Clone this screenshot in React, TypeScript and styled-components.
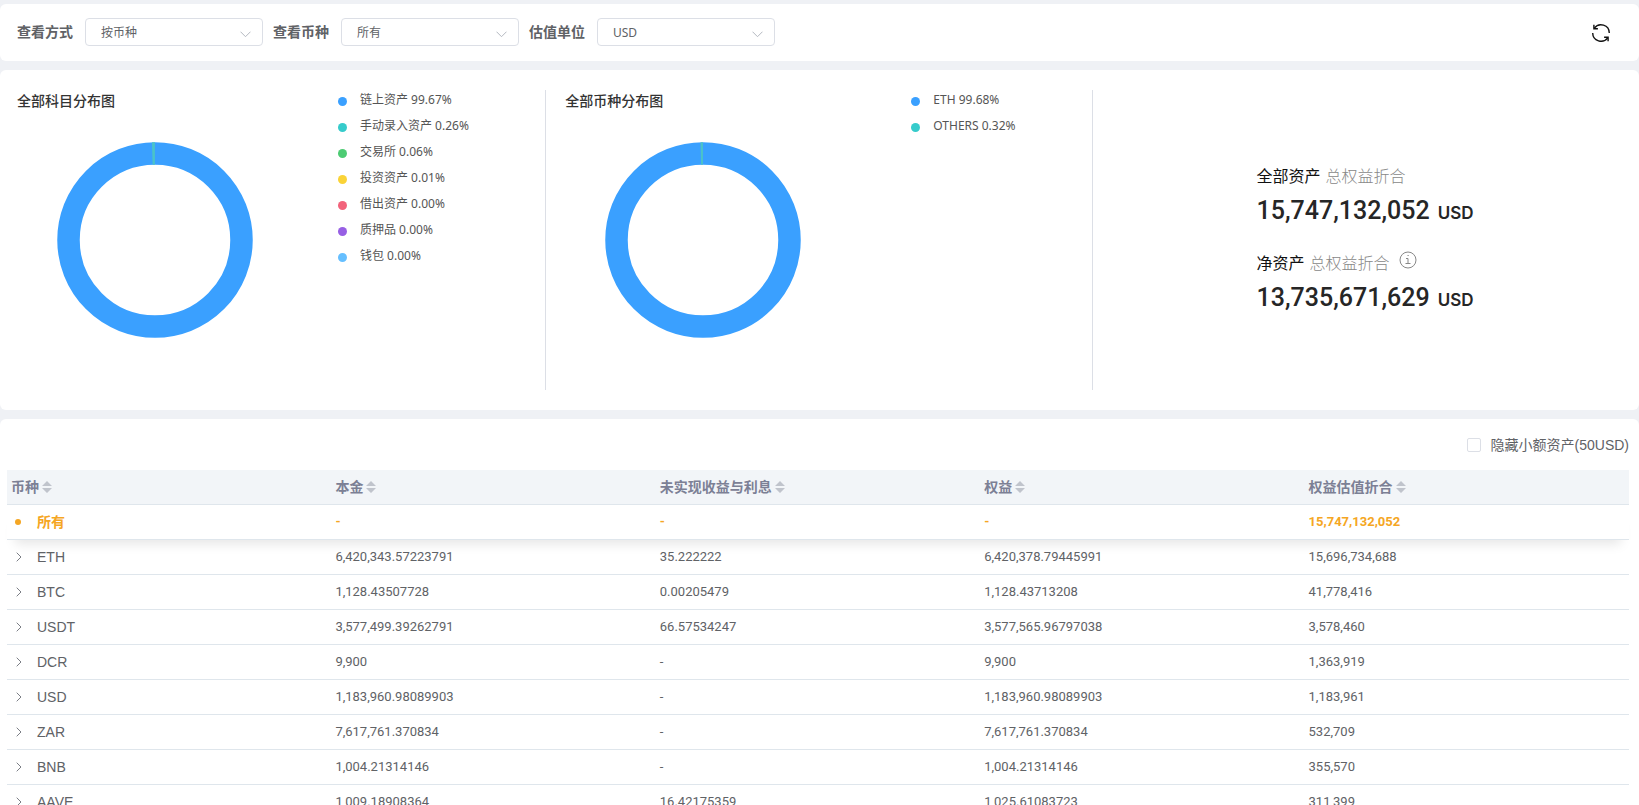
import React from "react";
import styled, { createGlobalStyle } from "styled-components";

const cjk = '"Noto Sans CJK SC", sans-serif';

const GlobalStyle = createGlobalStyle`
  * { box-sizing: border-box; }
  body {
    margin: 0;
    background: #eff1f5;
    color: #606266;
    font: 14px/20px "Liberation Sans", ${cjk};
  }
  button, input, select { font: inherit; color: inherit; }
`;

const Page = styled.main`
  display: flex;
  flex-direction: column;
  gap: 9px;
  height: 100vh;
  padding-top: 4px;
  overflow: hidden;
`;

const Panel = styled.section`
  flex: none;
  background: #fff;
  border-radius: 6px;
`;

const Toolbar = styled(Panel)`
  display: flex;
  align-items: center;
  gap: 10px;
  height: 57px;
  padding: 0 28px 1px 17px;
`;

const Field = styled.label`
  display: flex;
  align-items: center;
  gap: 12px;
  font-weight: 700;
`;

const SelectBox = styled.span`
  position: relative;
  width: 178px;
  svg {
    position: absolute;
    top: 13px;
    right: 12px;
    pointer-events: none;
  }
`;

const Select = styled.select`
  display: block;
  width: 100%;
  height: 28px;
  padding: 2px 30px 0 15px;
  border: 1px solid #dcdfe6;
  border-radius: 4px;
  background: #fff;
  appearance: none;
  font: 12px/18px "Noto Sans", ${cjk};
`;

const RefreshButton = styled.button`
  display: flex;
  margin: 2px 0 0 auto;
  padding: 0;
  border: 0;
  background: none;
  color: #111;
  cursor: pointer;
`;

const Overview = styled(Panel)`
  display: grid;
  grid-template-columns: repeat(3, 1fr);
  padding: 20px 0;
`;

const ChartColumn = styled.div<{ $chart: string }>`
  display: grid;
  grid-template-columns: ${(p) => p.$chart} 1fr;
  height: 300px;
  border-right: 1px solid #dcdfe6;
`;

const ChartSide = styled.div<{ $inset: number }>`
  padding-left: ${(p) => p.$inset}px;
`;

const ChartTitle = styled.h2`
  margin: 0 0 29px;
  color: #333;
  font-size: 14px;
  line-height: 22px;
  font-weight: 500;
`;

const Ring = styled.svg`
  display: block;
  margin-left: 39px;
`;

const Legend = styled.ul`
  margin: 0;
  padding: 0;
  list-style: none;
  font: 12px/20px "Noto Sans", ${cjk};
  color: #555;
`;

const LegendItem = styled.li<{ $color: string }>`
  display: flex;
  align-items: center;
  gap: 13px;
  height: 20px;
  margin-bottom: 6px;
  &::before {
    content: "";
    width: 9px;
    height: 9px;
    margin-top: 2px;
    border-radius: 50%;
    background: ${(p) => p.$color};
  }
`;

const Totals = styled.div`
  display: flex;
  flex-direction: column;
  gap: 15px;
  padding: 73px 0 0 30%;
`;

const TotalLabel = styled.div`
  display: flex;
  align-items: center;
  gap: 5px;
  height: 24px;
  color: #111;
  font: 400 16px/24px ${cjk};
`;

const Muted = styled.span`
  color: #888;
  font-weight: 300;
`;

const InfoButton = styled.button`
  display: flex;
  margin: 0 0 4px 4px;
  padding: 0;
  border: 0;
  background: none;
  color: #888;
`;

const TotalValue = styled.div`
  display: flex;
  align-items: baseline;
  gap: 8px;
  height: 48px;
  color: #262626;
  font: 500 25px/48px Roboto, sans-serif;
`;

const Unit = styled.span`
  font: 600 17px/24px Inter, sans-serif;
`;

const TablePanel = styled(Panel)`
  padding: 16px 10px 0 7px;
`;

const HideSmall = styled.label`
  display: flex;
  justify-content: flex-end;
  align-items: center;
  gap: 10px;
  height: 20px;
  margin-bottom: 15px;
`;

const Checkbox = styled.input`
  width: 14px;
  height: 14px;
  margin: 0;
  border: 1px solid #dcdfe6;
  border-radius: 2px;
  background: #fff;
  appearance: none;
  &:checked { background: #f5a623; }
`;

const Table = styled.table`
  width: 100%;
  table-layout: fixed;
  border-collapse: separate;
  border-spacing: 0;
  text-align: left;
`;

const HeadCell = styled.th`
  height: 35px;
  padding: 0 4px;
  border-bottom: 1px solid #dfe6ec;
  background: #f2f5f8;
  color: #7c8095;
  font-weight: 700;
`;

const SortButton = styled.button`
  display: flex;
  align-items: center;
  gap: 3px;
  padding: 0;
  border: 0;
  background: none;
`;

const Row = styled.tr<{ $total?: boolean }>`
  color: ${(p) => (p.$total ? "#f5a623" : "#606266")};
  font-weight: ${(p) => (p.$total ? 700 : 400)};
  box-shadow: ${(p) => (p.$total ? "0 12px 12px -8px rgba(0, 0, 0, 0.1)" : "none")};
`;

const Cell = styled.td`
  height: 35px;
  padding: 0 4px;
  border-bottom: 1px solid #dfe6ec;
  font-family: Roboto, sans-serif;
  font-size: 13px;
`;

const NameCell = styled(Cell)`
  font-family: "Liberation Sans", ${cjk};
  font-size: 14px;
`;

const CoinName = styled.span`
  display: flex;
  align-items: center;
  gap: 12px;
`;

const Marker = styled.span`
  display: flex;
  justify-content: center;
  width: 14px;
`;

const Dot = styled.span`
  width: 6px;
  height: 6px;
  border-radius: 50%;
  background: #f5a623;
`;

const ExpandButton = styled.button`
  display: flex;
  margin-left: 2px;
  padding: 0;
  border: 0;
  background: none;
`;

const filters: [string, string][] = [
  ["查看方式", "按币种"],
  ["查看币种", "所有"],
  ["估值单位", "USD"],
];

const subjects: [string, string][] = [
  ["链上资产 99.67%", "#3aa0ff"],
  ["手动录入资产 0.26%", "#36cbcb"],
  ["交易所 0.06%", "#4dcb73"],
  ["投资资产 0.01%", "#fad337"],
  ["借出资产 0.00%", "#f2637b"],
  ["质押品 0.00%", "#975fe4"],
  ["钱包 0.00%", "#66bfff"],
];

const coins: [string, string][] = [
  ["ETH 99.68%", "#3aa0ff"],
  ["OTHERS 0.32%", "#36cbcb"],
];

const columns = ["币种", "本金", "未实现收益与利息", "权益", "权益估值折合"];

const rows = [
  ["ETH", "6,420,343.57223791", "35.222222", "6,420,378.79445991", "15,696,734,688"],
  ["BTC", "1,128.43507728", "0.00205479", "1,128.43713208", "41,778,416"],
  ["USDT", "3,577,499.39262791", "66.57534247", "3,577,565.96797038", "3,578,460"],
  ["DCR", "9,900", "-", "9,900", "1,363,919"],
  ["USD", "1,183,960.98089903", "-", "1,183,960.98089903", "1,183,961"],
  ["ZAR", "7,617,761.370834", "-", "7,617,761.370834", "532,709"],
  ["BNB", "1,004.21314146", "-", "1,004.21314146", "355,570"],
  ["AAVE", "1,009.18908364", "16.42175359", "1,025.61083723", "311,399"],
];

function Distribution({ title, items, inset, chart, rest }: {
  title: string; items: [string, string][]; inset: number; chart: string; rest: number;
}) {
  return (
    <ChartColumn $chart={chart}>
      <ChartSide $inset={inset}>
        <ChartTitle>{title}</ChartTitle>
        <Ring width="198" height="198" viewBox="0 0 198 198" fill="none" strokeWidth="22.5" role="img" aria-label={title}>
          <circle cx="99" cy="99" r="86.5" stroke="#3aa0ff" />
          <circle cx="99" cy="99" r="86.5" stroke="#4bc3c8" pathLength="100"
            strokeDasharray={`${rest} ${100 - rest}`} transform={`rotate(${-90 - rest * 3.6} 99 99)`} />
        </Ring>
      </ChartSide>
      <Legend>
        {items.map(([text, color]) => <LegendItem key={text} $color={color}>{text}</LegendItem>)}
      </Legend>
    </ChartColumn>
  );
}

export default function App() {
  return (
    <>
      <GlobalStyle />
      <Page>
        <Toolbar>
          {filters.map(([label, value]) => (
            <Field key={label}>
              {label}
              <SelectBox>
                <Select defaultValue={value}><option>{value}</option></Select>
                <svg width="11" height="7" viewBox="0 0 11 7" fill="none" stroke="#b4b8c0">
                  <path d="M.5 .7 5.5 5.7 10.500 .7" />
                </svg>
              </SelectBox>
            </Field>
          ))}
          <RefreshButton aria-label="刷新">
            <svg width="20" height="20" viewBox="0 0 20 20" fill="none" stroke="currentColor" strokeWidth="1.4">
              <path d="M3.300 5.200A8.300 8.300 0 0 1 18.300 10M16.700 14.800A8.300 8.300 0 0 1 1.700 10" />
              <path d="M2.900 1.800v4h4M17.100 18.200v-4h-4" />
            </svg>
          </RefreshButton>
        </Toolbar>

        <Overview>
          <Distribution title="全部科目分布图" items={subjects} inset={17} chart="338px" rest={0.5} />
          <Distribution title="全部币种分布图" items={coins} inset={19} chart="365px" rest={0.4} />
          <Totals>
            <div>
              <TotalLabel>全部资产 <Muted>总权益折合</Muted></TotalLabel>
              <TotalValue>15,747,132,052 <Unit>USD</Unit></TotalValue>
            </div>
            <div>
              <TotalLabel>
                净资产 <Muted>总权益折合</Muted>
                <InfoButton aria-label="说明">
                  <svg width="18" height="18" viewBox="0 0 18 18" fill="none" stroke="currentColor">
                    <circle cx="9" cy="9" r="8" />
                    <path d="M7 7.500h2v5M6.500 12.500h5M8.500 4.500h1.200" />
                  </svg>
                </InfoButton>
              </TotalLabel>
              <TotalValue>13,735,671,629 <Unit>USD</Unit></TotalValue>
            </div>
          </Totals>
        </Overview>

        <TablePanel>
          <HideSmall>
            <Checkbox type="checkbox" />
            隐藏小额资产(50USD)
          </HideSmall>
          <Table>
            <thead>
              <tr>
                {columns.map((name) => (
                  <HeadCell key={name} scope="col">
                    <SortButton>
                      {name}
                      <svg width="10" height="12" viewBox="0 0 10 12" fill="#c0c4cc">
                        <path d="M0 5 5 0l5 5zM0 7l5 5 5-5z" />
                      </svg>
                    </SortButton>
                  </HeadCell>
                ))}
              </tr>
            </thead>
            <tbody>
              <Row $total>
                <NameCell><CoinName><Marker><Dot /></Marker>所有</CoinName></NameCell>
                <Cell>-</Cell>
                <Cell>-</Cell>
                <Cell>-</Cell>
                <Cell>15,747,132,052</Cell>
              </Row>
              {rows.map(([name, ...values]) => (
                <Row key={name}>
                  <NameCell>
                    <CoinName>
                      <Marker>
                        <ExpandButton aria-label={`展开 ${name}`}>
                          <svg width="6" height="10" viewBox="0 0 6 10" fill="none" stroke="#7b7e85">
                            <path d="M.7 .7 5 5 .7 9.300" />
                          </svg>
                        </ExpandButton>
                      </Marker>
                      {name}
                    </CoinName>
                  </NameCell>
                  {values.map((value, i) => <Cell key={i}>{value}</Cell>)}
                </Row>
              ))}
            </tbody>
          </Table>
        </TablePanel>
      </Page>
    </>
  );
}
